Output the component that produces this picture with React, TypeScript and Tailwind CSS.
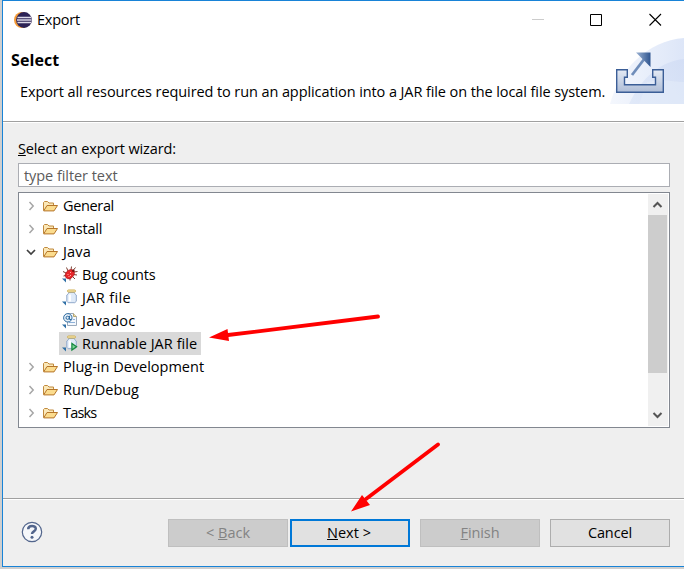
import React from "react";

const Folder = () => (
  <svg width="17" height="14" viewBox="0 0 17 14" className="shrink-0">
    <path d="M1.5 11.5V3.5L2.5 2.5H5.5L7 4H11.5V6" fill="#fbe8b8" stroke="#c08a3e" />
    <path d="M1.7 11.9L5 6.5H15.5L12 11.9Z" fill="#fbdc8e" stroke="#b5752a" strokeLinejoin="round" />
  </svg>
);

const Corner = () => <path d="M0 12.5H4V16.5Z" fill="#2f6fa5" />;

const Bug = () => (
  <svg width="16" height="17" viewBox="0 0 16 17" className="shrink-0">
    <path d="M4.5 1.5L6 5M9.5 0.5L9 4M1 5.5L5 7.5M1.5 10L5 9M13.5 1.5L11 4.5M15.5 5.5L12 6M15 9L11.5 8.5M11 11L13 13M8 12V14.5" stroke="#6b2a1c" strokeWidth="0.9" fill="none" />
    <ellipse cx="7.8" cy="8.2" rx="3.9" ry="5.1" transform="rotate(45 7.8 8.2)" fill="#e8262a" stroke="#b0161a" strokeWidth="0.8" />
    <path d="M5.5 8.5H6.5M8 6.5H9M8 9.5H9M6.5 10.5H7.5" stroke="#ffb0a6" />
    <circle cx="11.3" cy="4.8" r="1.3" fill="#7a130d" />
    <Corner />
  </svg>
);

const Jar = ({ run = false }: { run?: boolean }) => (
  <svg width="16" height="17" viewBox="0 0 16 17" className="shrink-0">
    <path d="M6.5 3.5V4.5L4.8 6V12.3L6.2 13.7H12.8L14.3 12.3V6L12.6 4.5V3.5Z" fill="#dfeaf8" stroke="#91a9cb" />
    <path d="M7.8 5.5V12.5" stroke="#fff" strokeWidth="2.2" />
    <rect x="5.5" y="1" width="8" height="2" rx="1" fill="#fbf0c4" stroke="#cfae50" />
    {run && <path d="M9.9 8.5V15L14.6 11.8Z" fill="#7fd39b" stroke="#15883e" strokeWidth="1.2" />}
    <Corner />
  </svg>
);

const Javadoc = () => (
  <svg width="16" height="17" viewBox="0 0 16 17" className="shrink-0">
    <path d="M5.5 1.5H11.5L14.5 4.5V13.5H5.5Z" fill="#f4f8fd" stroke="#9aaabc" />
    <path d="M11.5 1.5V4.5H14.5" fill="#f2dda0" stroke="#b8a772" />
    <path d="M11 7.5H13M7 10.5H13" stroke="#8db1d9" />
    <circle cx="5.8" cy="5.8" r="4.2" fill="#e3eef8" stroke="#2d6a9f" />
    <circle cx="5.6" cy="5.8" r="1.6" fill="none" stroke="#2d6a9f" />
    <path d="M7.5 3.8V7.5H9.5" fill="none" stroke="#2d6a9f" />
    <Corner />
  </svg>
);

const Twisty = ({ open = false }: { open?: boolean }) => (
  <svg width="10" height="10" viewBox="0 0 10 10" className="shrink-0">
    {open ? (
      <path d="M1 3L5 7L9 3" fill="none" stroke="#404040" strokeWidth="1.7" />
    ) : (
      <path d="M3.5 1L7.2 5L3.5 9" fill="none" stroke="#a6a6a6" strokeWidth="1.5" />
    )}
  </svg>
);

const Parent = ({ label, open, track }: { label: string; open?: boolean; track?: string }) => (
  <div className="flex h-[23px] items-center pl-[6px]">
    <Twisty open={open} />
    <span className="ml-[6px] flex"><Folder /></span>
    <span className={`ml-1 ${track ?? ""}`}>{label}</span>
  </div>
);

const Leaf = ({ icon, label, selected, track }: { icon: React.ReactNode; label: string; selected?: boolean; track?: string }) => (
  <div className="flex h-[23px] pl-[39px]">
    <div className={`flex h-full items-center pl-[3px] pr-1 ${selected ? "bg-[#d9d9d9]" : ""}`}>
      {icon}
      <span className={`ml-1 ${track ?? ""}`}>{label}</span>
    </div>
  </div>
);

export default function App() {
  return (
    <div className="relative h-[569px] w-[684px] overflow-hidden bg-[#cfcfcf] pl-[2px] font-['Open_Sans','Noto_Sans',sans-serif] text-[14.5px] leading-[20px] whitespace-nowrap text-black">
      <div className="flex h-[567px] w-[682px] flex-col border-y border-l border-[#1883d7] bg-[#efefef]">
        <header className="flex h-[120px] shrink-0 flex-col bg-white">
          <div className="flex h-[37px] items-center pl-[11px]">
            <svg width="18" height="18" viewBox="0 0 18 18">
              <circle cx="8" cy="9" r="8" fill="#f49b38" />
              <circle cx="10" cy="9" r="7.9" fill="#2c2255" />
              <path d="M3.5 6.5H17M3 9H17.5M3.5 11.5H17" stroke="#dcd9e8" strokeWidth="1.3" />
            </svg>
            <span className="ml-[5px] tracking-[-0.25px]">Export</span>
            <svg width="130" height="13" viewBox="0 0 130 13" className="ml-auto mr-[22px] -mt-px" fill="none">
              <path d="M0 6.5H12" stroke="#ccc" />
              <path d="M58.5 1.5H69.5V12.5H58.5Z" stroke="#000" strokeWidth="1" />
              <path d="M117.5 1L129 12.5M129 1L117.5 12.5" stroke="#000" strokeWidth="1.1" />
            </svg>
          </div>
          <div className="flex h-[66px]">
            <div className="flex w-[606px] flex-col">
              <h1 className="mt-[12px] ml-2 text-[16px] font-bold tracking-[0.1px]">Select</h1>
              <p className="mt-[12px] ml-[17px] tracking-[-0.092px]">Export all resources required to run an application into a JAR file on the local file system.</p>
            </div>
            <svg width="75" height="66" viewBox="0 0 75 66" className="shrink-0">
              <defs>
                <linearGradient id="swoosh" x1="0" x2="1"><stop stopColor="#f4f7fd" /><stop offset="1" stopColor="#dde6f8" /></linearGradient>
                <linearGradient id="inner" x1="0" x2="1" y1="1" y2="0"><stop stopColor="#dbe5f7" /><stop offset="1" stopColor="#cfdbf4" /></linearGradient>
                <linearGradient id="tray" x1="0" y1="0" x2="0" y2="1"><stop stopColor="#e4eaf4" /><stop offset="1" stopColor="#aebdd7" /></linearGradient>
                <linearGradient id="head" x1="0" x2="1"><stop stopColor="#9db4d4" /><stop offset="1" stopColor="#2f5590" /></linearGradient>
              </defs>
              <path d="M1 66C10 32 38 3 75 0V66Z" fill="url(#swoosh)" />
              <path d="M20 66C32 40 52 23 75 21V66Z" fill="url(#inner)" opacity=".7" />
              <path d="M38 44C55 40 65 44 75 44V66H30Z" fill="#e6edfa" opacity=".5" />
              <path d="M7.7 31.7H18.3V39.3H15.5V46.7H46.5V39.3H43.7V31.7H54.3V54.3H7.7Z" fill="url(#tray)" stroke="#3b5e97" strokeWidth="1.4" />
              <path d="M23 37L36 20" stroke="#6f8dba" strokeWidth="2.8" />
              <path d="M27 14.5H41.5V29Z" fill="url(#head)" />
            </svg>
          </div>
        </header>
        <div className="h-[2px] shrink-0 border-t border-[#a0a0a0] bg-white" />
        <main className="h-[375px] shrink-0 pt-[16px] pr-[14px] pl-[15px]">
          <label className="block h-5 tracking-[-0.13px]"><u>S</u>elect an export wizard:</label>
          <div className="mt-[4px] flex h-[24px] items-center border border-[#abadb3] bg-white pl-[5px] tracking-[-0.06px] text-[#5c5c5c]"><span className="pt-px">type filter text</span></div>
          <div className="mt-[5px] flex h-[236px] border border-[#828790] bg-white p-px">
            <div className="grow">
              <Parent label="General" track="tracking-[-0.35px]" />
              <Parent label="Install" track="tracking-[-0.15px]" />
              <Parent label="Java" open track="tracking-[0.15px]" />
              <Leaf icon={<Bug />} label="Bug counts" track="tracking-[-0.2px]" />
              <Leaf icon={<Jar />} label="JAR file" track="tracking-[0.35px]" />
              <Leaf icon={<Javadoc />} label="Javadoc" track="tracking-[0.25px]" />
              <Leaf icon={<Jar run />} label="Runnable JAR file" selected track="tracking-[0.06px]" />
              <Parent label="Plug-in Development" />
              <Parent label="Run/Debug" track="tracking-[-0.05px]" />
              <Parent label="Tasks" track="tracking-[-0.8px]" />
            </div>
            <div className="flex w-5 flex-col bg-[#f0f0f0]">
              <svg width="20" height="21" viewBox="0 0 20 21"><path d="M5.5 13L9.5 9L13.5 13" fill="none" stroke="#555" strokeWidth="2" /></svg>
              <div className="h-[158px] w-[19px] bg-[#cdcdcd]" />
              <svg width="20" height="21" viewBox="0 0 20 21" className="mt-auto"><path d="M5.5 8L9.5 12L13.5 8" fill="none" stroke="#555" strokeWidth="2" /></svg>
            </div>
          </div>
        </main>
        <div className="h-[2px] shrink-0 border-t border-[#a0a0a0] bg-white" />
        <footer className="flex h-[66px] items-center pr-[14px] pl-[18px]">
          <svg width="22" height="22" viewBox="0 0 22 22" className="-mt-[2px]">
            <circle cx="11" cy="11" r="9.7" fill="#f5f7fa" stroke="#52658c" strokeWidth="1.2" />
            <path d="M7.2 8.3C7.2 4 14.8 4 14.8 7.8C14.8 10.4 11 10.3 11 13" fill="none" stroke="#52658c" strokeWidth="2.5" />
            <circle cx="11" cy="16.3" r="1.5" fill="#52658c" />
          </svg>
          <div className="ml-auto flex h-7 leading-[26px] text-center">
            <button className="w-[120px] border border-[#bfbfbf] bg-[#cccccc] text-[#838383]">&lt; <u>B</u>ack</button>
            <button className="ml-[2px] w-[120px] border-2 border-[#0078d7] bg-[#e1e1e1] pr-[2px] leading-[24px]"><u>N</u>ext &gt;</button>
            <button className="ml-[10px] w-[120px] border border-[#bfbfbf] bg-[#cccccc] tracking-[-0.1px] text-[#838383]"><u>F</u>inish</button>
            <button className="ml-[10px] w-[120px] border border-[#adadad] bg-[#e1e1e1] tracking-[-0.1px]">Cancel</button>
          </div>
        </footer>
      </div>
      <svg className="pointer-events-none absolute inset-0" width="684" height="569" viewBox="0 0 684 569">
        <path d="M378 316.5L228 335M438 444.5L366 499" stroke="#f00" strokeWidth="3.8" strokeLinecap="round" />
        <path d="M209 337.5L227.5 329L229 341ZM351 511.5L362 495L370 505Z" fill="#f00" />
      </svg>
    </div>
  );
}
